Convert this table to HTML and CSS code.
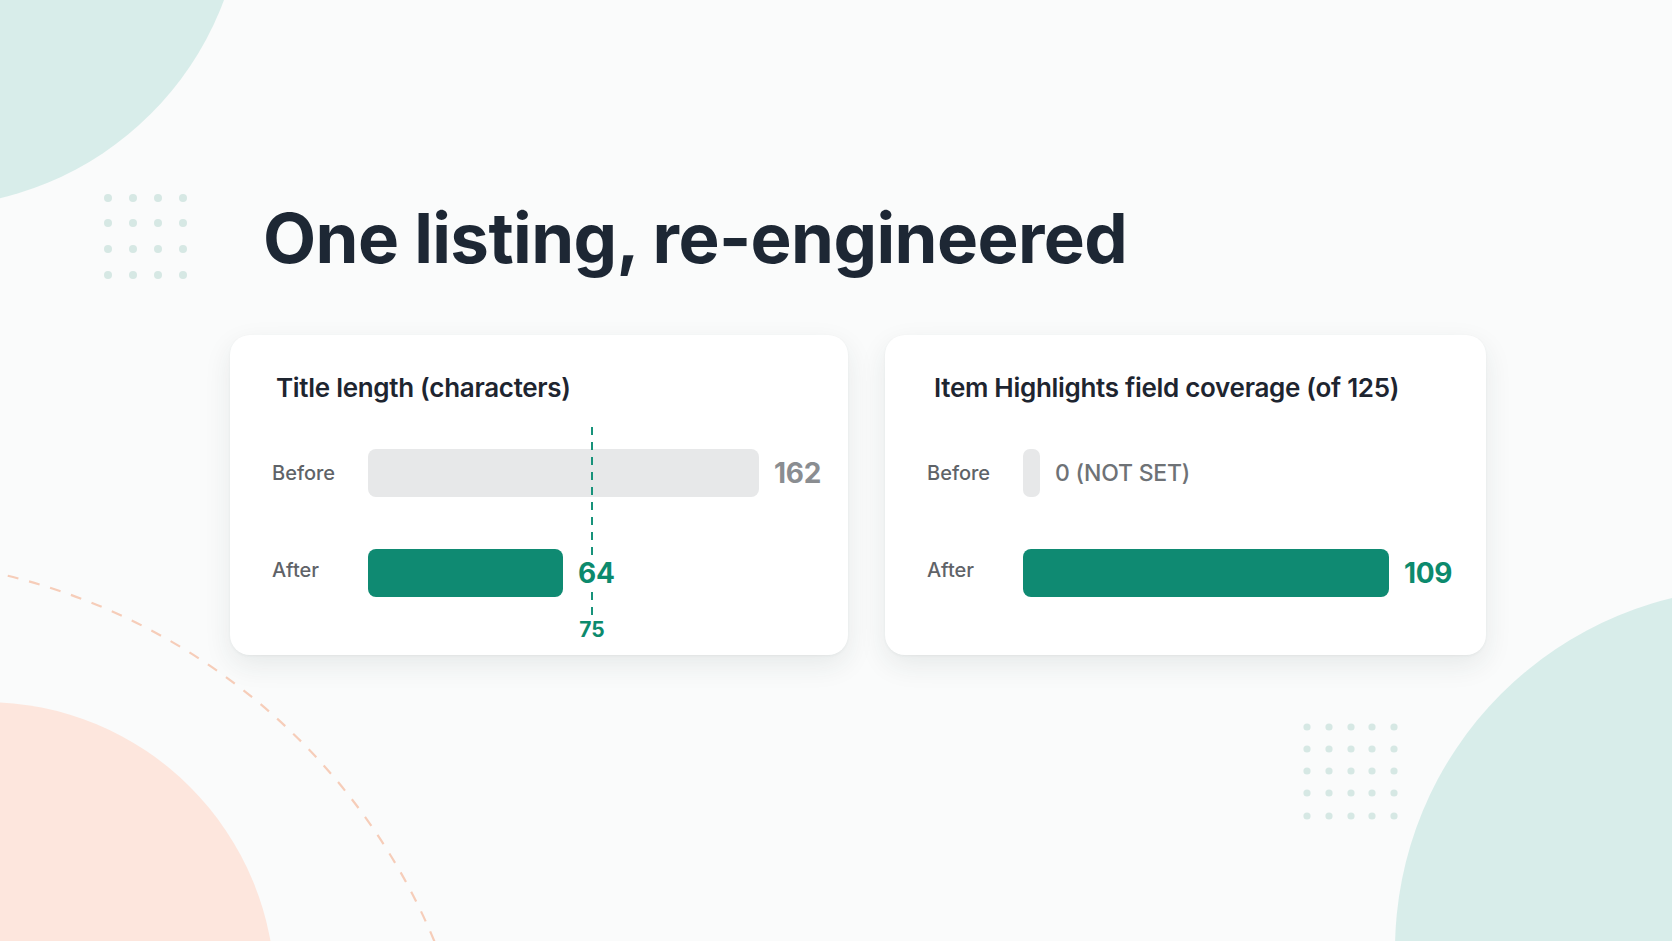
FILE: index.html
```html
<!DOCTYPE html>
<html lang="en">
<head>
<meta charset="utf-8">
<title>One listing, re-engineered</title>
<link rel="stylesheet" href="styles.css">
</head>
<body>
<div class="page">
  <svg class="backdrop" width="1672" height="941" viewBox="0 0 1672 941" aria-hidden="true">
    <circle cx="-74" cy="-111" r="318" fill="#d8edea"/>
    <circle cx="-15" cy="992" r="290" fill="#fde6dd"/>
    <circle cx="1757" cy="950" r="362" fill="#d8edea"/>
    <circle cx="-140" cy="1180" r="622" fill="none" stroke="#f6cdb9" stroke-width="2.2" stroke-dasharray="11 11"/>
    <g fill="#d6e8e4">
      <circle cx="108" cy="198" r="4"/><circle cx="133" cy="198" r="4"/><circle cx="158" cy="198" r="4"/><circle cx="183" cy="198" r="4"/>
      <circle cx="108" cy="223" r="4"/><circle cx="133" cy="223" r="4"/><circle cx="158" cy="223" r="4"/><circle cx="183" cy="223" r="4"/>
      <circle cx="108" cy="249" r="4"/><circle cx="133" cy="249" r="4"/><circle cx="158" cy="249" r="4"/><circle cx="183" cy="249" r="4"/>
      <circle cx="108" cy="275" r="4"/><circle cx="133" cy="275" r="4"/><circle cx="158" cy="275" r="4"/><circle cx="183" cy="275" r="4"/>
    </g>
    <g fill="#d6e8e4">
      <circle cx="1307" cy="727" r="3.6"/><circle cx="1329" cy="727" r="3.6"/><circle cx="1351" cy="727" r="3.6"/><circle cx="1372" cy="727" r="3.6"/><circle cx="1394" cy="727" r="3.6"/>
      <circle cx="1307" cy="749" r="3.6"/><circle cx="1329" cy="749" r="3.6"/><circle cx="1351" cy="749" r="3.6"/><circle cx="1372" cy="749" r="3.6"/><circle cx="1394" cy="749" r="3.6"/>
      <circle cx="1307" cy="771" r="3.6"/><circle cx="1329" cy="771" r="3.6"/><circle cx="1351" cy="771" r="3.6"/><circle cx="1372" cy="771" r="3.6"/><circle cx="1394" cy="771" r="3.6"/>
      <circle cx="1307" cy="793" r="3.6"/><circle cx="1329" cy="793" r="3.6"/><circle cx="1351" cy="793" r="3.6"/><circle cx="1372" cy="793" r="3.6"/><circle cx="1394" cy="793" r="3.6"/>
      <circle cx="1307" cy="816" r="3.6"/><circle cx="1329" cy="816" r="3.6"/><circle cx="1351" cy="816" r="3.6"/><circle cx="1372" cy="816" r="3.6"/><circle cx="1394" cy="816" r="3.6"/>
    </g>
  </svg>

  <main class="content">
    <h1 class="headline">One listing, re-engineered</h1>

    <section class="cards">
      <article class="card card-left">
        <h2 class="card-heading">Title length (characters)</h2>
        <div class="chart">
          <div class="marker" style="left: 319px;"></div>
          <div class="marker-label" style="left: 320px;">75</div>
          <div class="row">
            <span class="label">Before</span>
            <div class="track">
              <div class="bar bar-before" style="width: 391px;"></div>
              <span class="value value-muted">162</span>
            </div>
          </div>
          <div class="row">
            <span class="label label-after">After</span>
            <div class="track">
              <div class="bar bar-after" style="width: 195px;"></div>
              <span class="value value-accent">64</span>
            </div>
          </div>
        </div>
      </article>

      <article class="card card-right">
        <h2 class="card-heading heading-right">Item Highlights field coverage (of 125)</h2>
        <div class="chart">
          <div class="row">
            <span class="label">Before</span>
            <div class="track">
              <div class="bar bar-before bar-empty" style="width: 17px;"></div>
              <span class="value-note">0 (NOT SET)</span>
            </div>
          </div>
          <div class="row">
            <span class="label label-after">After</span>
            <div class="track">
              <div class="bar bar-after" style="width: 366px;"></div>
              <span class="value value-accent">109</span>
            </div>
          </div>
        </div>
      </article>
    </section>
  </main>
</div>
</body>
</html>
```

FILE: styles.css
```css
html, body {
  margin: 0;
  padding: 0;
}

body {
  background: #fafbfb;
  font-family: "Inter", "Lato", "Noto Sans", sans-serif;
  color: #1e2734;
}

.page {
  position: relative;
  width: 1672px;
  height: 941px;
  overflow: hidden;
  background: #fafbfb;
}

.backdrop {
  position: absolute;
  left: 0;
  top: 0;
  z-index: 0;
}

.content {
  position: relative;
  z-index: 1;
  padding: 203px 0 0 230px;
}

.headline {
  margin: 0 0 62px 33px;
  font-size: 69px;
  line-height: 70px;
  font-weight: 700;
  color: #1d2734;
  letter-spacing: -0.6px;
}

.cards {
  display: flex;
  gap: 37px;
  align-items: stretch;
}

.card {
  box-sizing: border-box;
  min-width: 0;
  background: #ffffff;
  border-radius: 20px;
  padding: 37px 24px 58px 42px;
  box-shadow: 0 10px 28px rgba(30, 50, 50, 0.09), 0 1px 3px rgba(30, 50, 50, 0.05);
}

.card-left {
  flex: 0 0 618px;
  width: 618px;
}

.card-right {
  flex: 0 0 601px;
  width: 601px;
}

.card-heading {
  margin: 0 0 46px 4px;
  font-size: 26px;
  line-height: 1.2;
  font-weight: 600;
  color: #1e2530;
  letter-spacing: -0.3px;
  white-space: nowrap;
}

.heading-right {
  margin-left: 7px;
}

.chart {
  position: relative;
  display: flex;
  flex-direction: column;
  gap: 52px;
}

.row {
  display: grid;
  grid-template-columns: 96px 1fr;
  align-items: center;
  height: 48px;
}

.label {
  font-size: 20px;
  font-weight: 500;
  color: #5f6368;
}

.label-after {
  margin-bottom: 6px;
}

.track {
  display: flex;
  align-items: center;
  gap: 15px;
  white-space: nowrap;
}

.bar {
  height: 48px;
  border-radius: 8px;
  flex: 0 0 auto;
}

.bar-before {
  background: #e7e8e9;
}

.bar-empty {
  border-radius: 7px;
}

.bar-after {
  background: #0f8a72;
}

.value {
  position: relative;
  z-index: 2;
  font-size: 28px;
  line-height: 29px;
  font-weight: 700;
  padding: 4px 0;
  background: #ffffff;
  letter-spacing: -0.3px;
}

.value-muted {
  color: #8a8d91;
  background: transparent;
}

.value-accent {
  color: #0c8a6d;
}

.value-note {
  font-size: 23px;
  font-weight: 500;
  color: #6e7276;
  letter-spacing: -0.2px;
}

.marker {
  position: absolute;
  top: -22px;
  width: 2px;
  height: 188px;
  z-index: 1;
  background: repeating-linear-gradient(to bottom, #17927a 0 8px, transparent 8px 15px);
}

.marker-label {
  position: absolute;
  top: 170px;
  transform: translateX(-50%);
  font-size: 21px;
  line-height: 22px;
  font-weight: 700;
  color: #0c8a6d;
}
```
